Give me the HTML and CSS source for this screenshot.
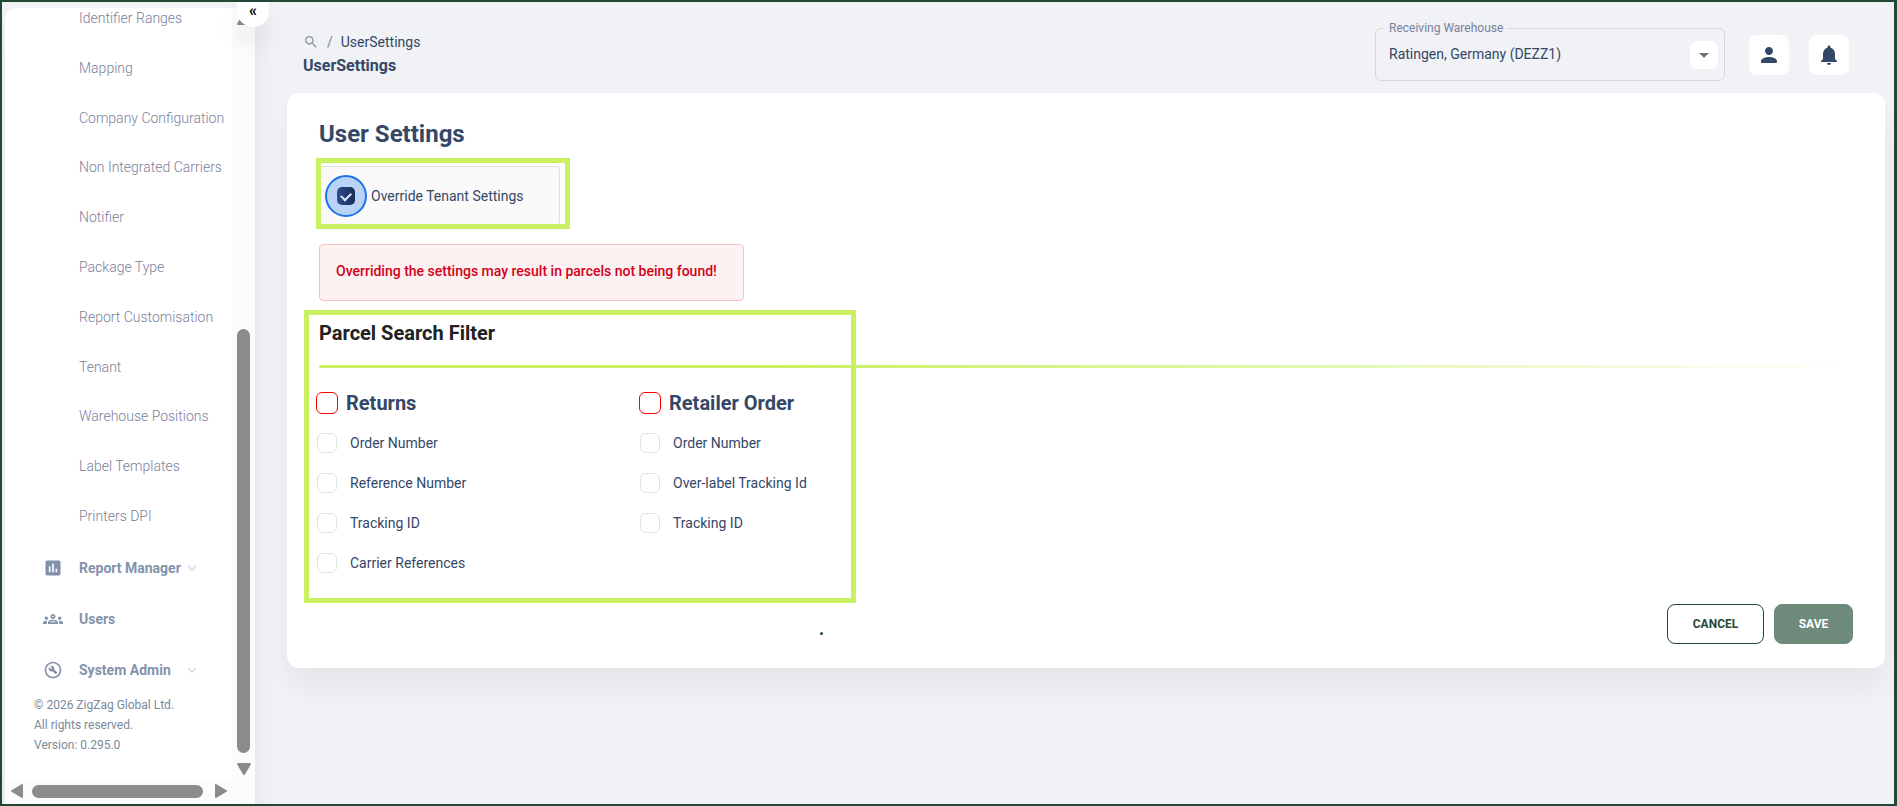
FILE: index.html
```html
<!DOCTYPE html>
<html lang="en">
<head>
<meta charset="utf-8">
<title>UserSettings</title>
<link rel="stylesheet" href="styles.css">
</head>

<body>

<div class="app">

<aside class="sidebar">
<button class="collapse" type="button" aria-label="Collapse menu">«</button>

<div class="scroll-area">
<nav class="menu">
<div class="submenu">
<a href="#">Identifier Ranges</a>
<a href="#">Mapping</a>
<a href="#">Company Configuration</a>
<a href="#">Non Integrated Carriers</a>
<a href="#">Notifier</a>
<a href="#">Package Type</a>
<a href="#">Report Customisation</a>
<a href="#">Tenant</a>
<a href="#">Warehouse Positions</a>
<a href="#">Label Templates</a>
<a href="#">Printers DPI</a>
</div>

<a class="menu-item" href="#">
<svg class="menu-icon" viewBox="0 0 24 24"><path d="M19 3H5c-1.1 0-2 .9-2 2v14c0 1.1.9 2 2 2h14c1.1 0 2-.9 2-2V5c0-1.1-.9-2-2-2zM9 17H7v-7h2v7zm4 0h-2V7h2v10zm4 0h-2v-4h2v4z"/></svg>
<span class="menu-text">Report Manager</span>
<svg class="chevron" viewBox="0 0 10 6"><path d="M1 1l4 4 4-4"/></svg>
</a>
<a class="menu-item" href="#">
<svg class="menu-icon" viewBox="0 0 24 24"><path d="M4 13c1.1 0 2-.9 2-2s-.9-2-2-2-2 .9-2 2 .9 2 2 2zm1.13 1.1c-.37-.06-.74-.1-1.13-.1-.99 0-1.93.21-2.78.58C.48 14.9 0 15.62 0 16.43V18h4.5v-1.61c0-.83.23-1.61.63-2.29zM20 13c1.1 0 2-.9 2-2s-.9-2-2-2-2 .9-2 2 .9 2 2 2zm4 3.43c0-.81-.48-1.53-1.22-1.85-.85-.37-1.79-.58-2.78-.58-.39 0-.76.04-1.13.1.4.68.63 1.46.63 2.29V18H24v-1.57zM16.24 13.65c-1.17-.52-2.61-.9-4.24-.9-1.63 0-3.07.39-4.24.9C6.68 14.13 6 15.21 6 16.39V18h12v-1.61c0-1.18-.68-2.26-1.76-2.74zM8.07 16c.09-.23.13-.39.91-.69.97-.38 1.99-.56 3.02-.56s2.05.18 3.02.56c.77.3.81.46.91.69H8.07zM12 8c.55 0 1 .45 1 1s-.45 1-1 1-1-.45-1-1 .45-1 1-1m0-2c-1.66 0-3 1.34-3 3s1.34 3 3 3 3-1.34 3-3-1.34-3-3-3z"/></svg>
<span class="menu-text">Users</span>
</a>
<a class="menu-item" href="#">
<svg class="menu-icon" viewBox="0 0 24 24"><path d="M12 2C6.48 2 2 6.48 2 12s4.48 10 10 10 10-4.48 10-10S17.52 2 12 2zm0 18c-4.41 0-8-3.59-8-8s3.59-8 8-8 8 3.59 8 8-3.59 8-8 8z"/><path d="M13.49 11.38c.43-1.22.17-2.64-.81-3.62-1.11-1.11-2.79-1.3-4.1-.59l2.35 2.35-1.41 1.41-2.35-2.35c-.71 1.32-.52 2.99.59 4.1.98.98 2.4 1.24 3.62.81l3.41 3.41c.2.2.51.2.71 0l1.4-1.4c.2-.2.2-.51 0-.71l-3.41-3.41z"/></svg>
<span class="menu-text">System Admin</span>
<svg class="chevron" viewBox="0 0 10 6"><path d="M1 1l4 4 4-4"/></svg>
</a>
</nav>

<footer class="copyright">
© 2026 ZigZag Global Ltd.<br>
All rights reserved.<br>
Version: 0.295.0
</footer>
</div>

<div class="scrollbar vertical">
<svg class="arrow" viewBox="0 0 14 12"><path d="M7 1l6 10H1z"/></svg>
<div class="track"><div class="thumb"></div></div>
<svg class="arrow" viewBox="0 0 14 12"><path d="M1 1h12L7 11z"/></svg>
</div>

<div class="scrollbar horizontal">
<svg class="arrow" viewBox="0 0 12 14"><path d="M11 1v12L1 7z"/></svg>
<div class="thumb"></div>
<svg class="arrow" viewBox="0 0 12 14"><path d="M1 1v12l10-6z"/></svg>
</div>
</aside>

<main class="content">

<header class="topbar">
<div class="heading">
<div class="breadcrumb">
<a href="#" aria-label="Search"><svg viewBox="0 0 24 24"><path d="M15.5 14h-.79l-.28-.27C15.41 12.59 16 11.11 16 9.5 16 5.91 13.09 3 9.5 3S3 5.91 3 9.5 5.91 16 9.5 16c1.61 0 3.09-.59 4.23-1.57l.27.28v.79l5 4.99L20.49 19l-4.99-5zm-6 0C7.01 14 5 11.99 5 9.5S7.01 5 9.5 5 14 7.01 14 9.5 11.99 14 9.5 14z"/></svg></a>
<span class="slash">/</span>
<span>UserSettings</span>
</div>
<h6 class="page-name">UserSettings</h6>
</div>

<div class="warehouse">
<label for="warehouse">Receiving Warehouse</label>
<select id="warehouse">
<option>Ratingen, Germany (DEZZ1)</option>
</select>
<span class="caret"><svg viewBox="0 0 24 24"><path d="M7 10l5 5 5-5z"/></svg></span>
</div>

<div class="actions">
<button class="icon-button" type="button" aria-label="Account"><svg viewBox="0 0 24 24"><path d="M12 12c2.21 0 4-1.79 4-4s-1.79-4-4-4-4 1.79-4 4 1.79 4 4 4zm0 2c-2.67 0-8 1.34-8 4v1c0 .55.45 1 1 1h14c.55 0 1-.45 1-1v-1c0-2.66-5.33-4-8-4z"/></svg></button>
<button class="icon-button" type="button" aria-label="Notifications"><svg viewBox="0 0 24 24"><path d="M12 22c1.1 0 2-.9 2-2h-4c0 1.1.89 2 2 2zm6-6v-5c0-3.07-1.64-5.64-4.5-6.32V4c0-.83-.67-1.5-1.5-1.5s-1.5.67-1.5 1.5v.68C7.63 5.36 6 7.92 6 11v5l-2 2v1h16v-1l-2-2z"/></svg></button>
</div>
</header>

<form class="card">
<h1 class="title">User Settings</h1>

<div class="override-wrapper">
<label class="override">
<span class="ripple"><input type="checkbox" checked></span>
Override Tenant Settings
</label>
<div class="highlight highlight-override"></div>
</div>

<div class="alert" role="alert">Overriding the settings may result in parcels not being found!</div>

<section class="filter">
<h2 class="filter-title">Parcel Search Filter</h2>
<div class="divider"></div>

<div class="groups">
<div class="group">
<label class="check group-title"><input type="checkbox">Returns</label>
<label class="check"><input type="checkbox">Order Number</label>
<label class="check"><input type="checkbox">Reference Number</label>
<label class="check"><input type="checkbox">Tracking ID</label>
<label class="check"><input type="checkbox">Carrier References</label>
</div>
<div class="group">
<label class="check group-title"><input type="checkbox">Retailer Order</label>
<label class="check"><input type="checkbox">Order Number</label>
<label class="check"><input type="checkbox">Over-label Tracking Id</label>
<label class="check"><input type="checkbox">Tracking ID</label>
</div>
</div>
<div class="highlight highlight-filter"></div>
<div class="dot"></div>
</section>

<div class="buttons">
<button class="button cancel" type="button">CANCEL</button>
<button class="button save" type="submit">SAVE</button>
</div>
</form>

</main>
</div>

</body>
</html>
```

FILE: styles.css
```css
* {
  box-sizing: border-box;
}

body {
  margin: 0;
  font-family: Roboto, "Liberation Sans", sans-serif;
  font-size: 14px;
  line-height: 20px;
  color: #344767;
  background-color: #f0f2f5;
}

h1, h2, h6 {
  margin: 0;
}

a {
  color: inherit;
  text-decoration: none;
}

button, select {
  font-family: inherit;
}

svg {
  display: block;
  fill: currentColor;
}

.app {
  display: flex;
  min-height: 100vh;
  border: 2px solid #1f4a35;
  border-right-width: 3px;
}

/* sidebar */

.sidebar {
  position: relative;
  display: grid;
  grid-template-columns: 1fr 23px;
  grid-template-rows: 1fr 24px;
  flex: none;
  width: 250px;
  margin: 6px 0 0 3px;
  border-radius: 12px 0 0 0;
  background-color: #fff;
  box-shadow: 0 20px 27px rgba(0, 0, 0, 0.06);
}

.collapse {
  position: absolute;
  top: -6px;
  right: -14px;
  z-index: 1;
  width: 32px;
  height: 25px;
  padding: 0 0 8px;
  border: 0;
  border-radius: 0 0 16px 16px;
  font-size: 16px;
  font-weight: 700;
  line-height: 16px;
  color: #000;
  background-color: #fff;
  box-shadow: 0 16px 24px rgba(0, 0, 0, 0.08);
  cursor: pointer;
}

.scroll-area {
  display: flex;
  flex-direction: column;
  padding-bottom: 25px;
}

.menu {
  display: flex;
  flex-direction: column;
  flex: 1;
}

.submenu {
  display: flex;
  flex-direction: column;
  flex: 1;
  justify-content: space-between;
  padding-bottom: 16px;
  padding-left: 74px;
  font-weight: 300;
  color: #7b809a;
  white-space: nowrap;
}

.menu-item {
  display: flex;
  align-items: center;
  height: 51px;
  padding-left: 38px;
  font-weight: 700;
  color: #8392ab;
}

.menu-icon {
  width: 20px;
  margin-right: 16px;
}

.menu-text {
  min-width: 103px;
}

.chevron {
  width: 10px;
  margin-left: 5px;
  fill: none;
  stroke: #dee2e8;
  stroke-width: 2;
}

.copyright {
  padding-left: 29px;
  font-size: 12px;
  color: #7b8a9a;
}

.scrollbar {
  display: flex;
  align-items: center;
  color: #8b8b8b;
  background-color: #fcfcfc;
}

.scrollbar .arrow {
  stroke: currentColor;
  stroke-width: 2;
  stroke-linejoin: round;
}

.scrollbar .thumb {
  border-radius: 7px;
  background-color: #8b8b8b;
}

.vertical {
  flex-direction: column;
  padding: 5px 0;
}

.vertical .arrow {
  width: 14px;
}

.vertical .track {
  display: flex;
  flex: 1;
  align-items: flex-end;
  padding: 10px 0;
}

.vertical .thumb {
  width: 13px;
  height: 59%;
}

.horizontal {
  grid-column: 1 / 3;
  gap: 9px;
  padding: 0 28px 2px 6px;
}

.horizontal .arrow {
  width: 12px;
}

.horizontal .thumb {
  width: 171px;
  height: 13px;
}

.horizontal .arrow:last-child {
  margin-left: auto;
}

/* header */

.content {
  flex: 1;
  padding: 26px 9px 0 32px;
}

.topbar {
  display: flex;
  align-items: flex-start;
  height: 65px;
  padding-right: 36px;
}

.heading {
  flex: 1;
  padding: 4px 0 0 16px;
}

.breadcrumb {
  display: flex;
  align-items: center;
  gap: 8px;
}

.breadcrumb svg {
  width: 16px;
  color: #8c96a8;
}

.breadcrumb .slash {
  color: #7b809a;
}

.page-name {
  font-size: 16px;
  font-weight: 700;
  line-height: 28px;
}

.warehouse {
  position: relative;
  width: 350px;
}

.warehouse label {
  position: absolute;
  top: -10px;
  left: 9px;
  padding: 0 5px;
  font-size: 12px;
  color: #7b809a;
  background-color: #f0f2f5;
}

.warehouse select {
  width: 100%;
  height: 53px;
  padding: 0 40px 2px 13px;
  border: 1px solid #d6d8dc;
  border-radius: 6px;
  font-size: 14px;
  color: #344767;
  background-color: transparent;
  appearance: none;
}

.warehouse .caret {
  position: absolute;
  top: 13px;
  right: 7px;
  width: 28px;
  padding: 2px;
  border-radius: 8px;
  color: #757575;
  background-color: #fff;
  pointer-events: none;
}

.actions {
  display: flex;
  gap: 20px;
  margin: 7px 0 0 24px;
}

.icon-button {
  width: 40px;
  height: 40px;
  padding: 8px;
  border: 0;
  border-radius: 8px;
  color: #344767;
  background-color: #fff;
  cursor: pointer;
}

/* settings card */

.card {
  padding: 24px 32px;
  border-radius: 12px;
  background-color: #fff;
  box-shadow: 0 20px 27px rgba(0, 0, 0, 0.05);
}

.title {
  margin-bottom: 14px;
  font-size: 24px;
  font-weight: 700;
  line-height: 35px;
}

.override-wrapper {
  position: relative;
  width: 241px;
}

.override {
  display: flex;
  align-items: center;
  gap: 4px;
  height: 60px;
  padding-left: 6px;
  border: 1px solid #dee2e6;
  border-left: 0;
  border-radius: 4px;
  background-color: #fafafa;
  white-space: nowrap;
}

.ripple {
  display: flex;
  align-items: center;
  justify-content: center;
  width: 42px;
  height: 42px;
  border: 2px solid #1a73e8;
  border-radius: 50%;
  background-color: #b9d2f6;
}

.ripple input {
  display: grid;
  width: 18px;
  height: 18px;
  margin: 0;
  border-radius: 5px;
  background-image: linear-gradient(90deg, #2c4c8c, #182c58);
  appearance: none;
}

.ripple input::after {
  content: "";
  width: 8px;
  height: 5px;
  margin: 5px auto 0;
  border: solid #dce8fa;
  border-width: 0 0 2px 2px;
  transform: rotate(-45deg);
}

.highlight {
  position: absolute;
  border: 5px solid #c8f060;
  pointer-events: none;
}

.highlight-override {
  top: -8px;
  right: -10px;
  bottom: -3px;
  left: -3px;
}

.alert {
  width: fit-content;
  margin: 18px 0 8px;
  padding: 16px 26px 19px 16px;
  border: 1px solid #fdc0c0;
  border-radius: 4px;
  font-weight: 500;
  color: #d0021b;
  background-color: #fef1f1;
}

.filter {
  position: relative;
  padding-top: 12px;
}

.filter-title {
  font-size: 20px;
  font-weight: 700;
  line-height: 24px;
  color: #212121;
}

.divider {
  height: 3px;
  margin: 20px 0 15px;
  border-radius: 2px;
  background-image: linear-gradient(90deg, #c8f060 30%, transparent);
}

.groups {
  display: grid;
  grid-template-columns: 323px 323px;
}

.check {
  display: flex;
  align-items: center;
  gap: 13px;
  height: 40px;
}

.check input {
  width: 20px;
  height: 20px;
  margin: 0 0 0 -2px;
  border: 1px solid #dfe2e7;
  border-radius: 6px;
  appearance: none;
}

.group-title {
  gap: 8px;
  font-size: 20px;
  font-weight: 700;
}

.group-title input {
  width: 22px;
  height: 22px;
  margin-left: -3px;
  border-color: #f00;
}

.highlight-filter {
  top: 1px;
  left: -15px;
  width: 552px;
  height: 293px;
}

.dot {
  position: absolute;
  bottom: -52px;
  left: 501px;
  width: 3px;
  height: 3px;
  border-radius: 50%;
  background-color: #1f4a35;
}

.buttons {
  display: flex;
  justify-content: flex-end;
  gap: 10px;
  margin-top: 21px;
}

.button {
  height: 40px;
  border: 1px solid #1f4a35;
  border-radius: 8px;
  font-size: 12px;
  font-weight: 700;
  color: #1f4a35;
  background-color: #fff;
  cursor: pointer;
}

.cancel {
  width: 97px;
}

.save {
  width: 79px;
  border-color: #6e8a7a;
  color: #fff;
  background-color: #6e8a7a;
}
```
